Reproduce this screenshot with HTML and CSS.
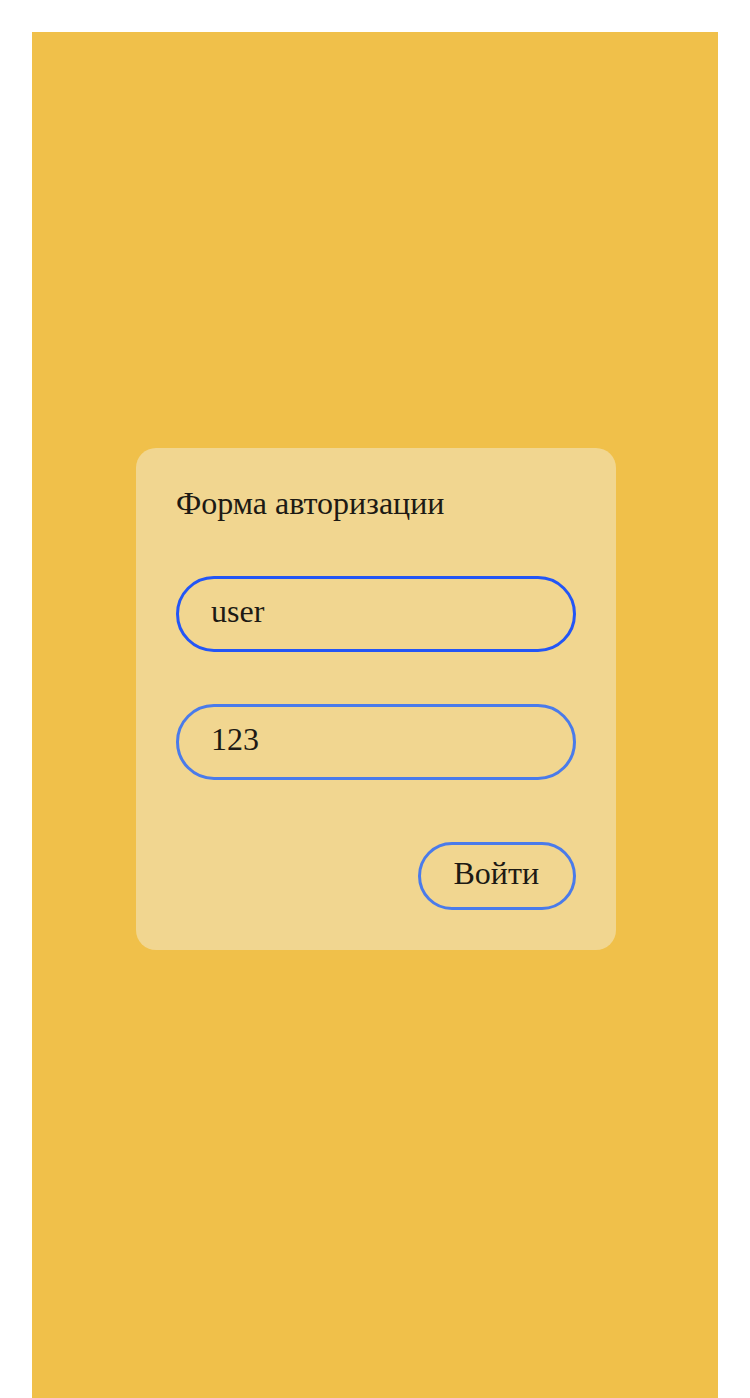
FILE: index.html
```html
<!DOCTYPE html>
<html lang="ru">
<head>
<meta charset="utf-8">
<title>Форма авторизации</title>
<link rel="stylesheet" href="styles.css">
</head>
<body>
<div class="panel">
  <form class="card">
    <h1 class="title">Форма авторизации</h1>
    <input class="field field-active" type="text" value="user">
    <input class="field" type="text" value="123">
    <div class="actions">
      <button class="btn" type="button">Войти</button>
    </div>
  </form>
</div>
</body>
</html>
```
FILE: styles.css
```css
html, body {
  margin: 0;
  padding: 0;
  background: #ffffff;
}
body {
  padding: 32px 32px 0;
  font-family: "Liberation Serif", "Times New Roman", serif;
}
.panel {
  box-sizing: border-box;
  height: calc(100vh - 32px);
  padding-bottom: 32px;
  background: #f0c04a;
  display: flex;
  align-items: center;
  justify-content: center;
}
.card {
  box-sizing: border-box;
  width: 480px;
  margin-left: 2px;
  padding: 37px 40px 40px;
  background: #f1d690;
  border-radius: 20px;
  display: flex;
  flex-direction: column;
}
.title {
  margin: 0 0 54px;
  font-size: 32px;
  font-weight: normal;
  line-height: normal;
  color: #1d1a14;
}
.field {
  box-sizing: border-box;
  width: 400px;
  height: 76px;
  margin: 0 0 52px;
  padding: 0 32px 6px;
  border: 3px solid #4a7bea;
  border-radius: 38px;
  background: transparent;
  font-family: "Liberation Serif", "Times New Roman", serif;
  font-size: 32px;
  color: #1d1a14;
  outline: none;
}
.field-active {
  border-color: #2356f6;
}
.field:last-of-type {
  margin-bottom: 62px;
}
.actions {
  display: flex;
  justify-content: flex-end;
}
.btn {
  box-sizing: border-box;
  height: 68px;
  padding: 0 34px 6px 32px;
  border: 3px solid #4a7bea;
  border-radius: 34px;
  background: transparent;
  font-family: "Liberation Serif", "Times New Roman", serif;
  font-size: 32px;
  color: #1d1a14;
  cursor: pointer;
}
```
